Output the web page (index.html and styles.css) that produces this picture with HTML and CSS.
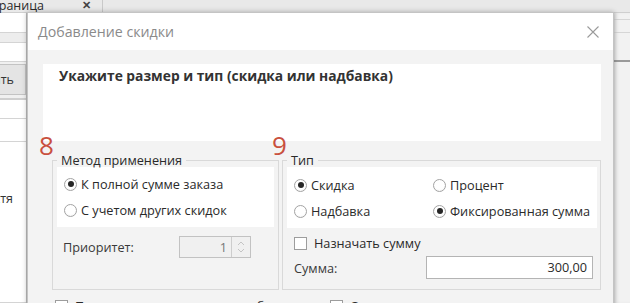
FILE: index.html
```html
<!DOCTYPE html>
<html lang="ru">
<head>
<meta charset="utf-8">
<title>Добавление скидки</title>
<link rel="stylesheet" href="styles.css">
</head>
<body>
<div class="app">
  <div class="tabbar">
    <div class="tab"><span class="tab-title">Страница</span><span class="tab-close">✕</span></div>
  </div>
  <div class="workspace">
    <div class="left-pane">
      <div class="lrow lrow-a"></div>
      <div class="lrow lrow-b"></div>
      <div class="lrow lrow-c"></div>
      <div class="lrow lrow-btn"><span class="lbtn"><span class="lbtn-text">Добавить</span></span></div>
      <div class="lrow lrow-d"></div>
      <div class="lrow lrow-e"></div>
      <div class="lrow lrow-f"><span class="ltext">Скидка на гостя</span></div>
    </div>
    <div class="center-pane"></div>
    <div class="right-pane">
      <div class="rrow rrow-a"></div>
      <div class="rrow rrow-b"></div>
      <div class="rrow rrow-c"></div>
      <div class="rrow rrow-d"></div>
    </div>
  </div>

  <div class="dialog">
    <div class="dialog-header">
      <span class="dialog-title">Добавление скидки</span>
      <svg class="dialog-close" width="12" height="12" viewBox="0 0 12 12"><path d="M0.5 0.5 L11.5 11.5 M11.5 0.5 L0.5 11.5" stroke="#9a9a9a" stroke-width="1.1" fill="none"/></svg>
    </div>
    <div class="dialog-body">
      <div class="info">Укажите размер и тип (скидка или надбавка)</div>
      <div class="groups">
        <fieldset class="group group-method">
          <legend class="legend"><span class="marker marker-8">8</span>Метод применения</legend>
          <div class="choice-panel">
            <div class="option"><span class="radio checked"></span>К полной сумме заказа</div>
            <div class="option"><span class="radio"></span>С учетом других скидок</div>
          </div>
          <div class="priority-row">
            <span class="field-label">Приоритет:</span>
            <div class="spinner">
              <span class="spinner-value">1</span>
              <span class="spinner-btns">
                <svg width="8" height="16" viewBox="0 0 8 16"><path d="M1 6 L4 3 L7 6 M1 10 L4 13 L7 10" stroke="#c4c4c4" stroke-width="1" fill="none"/></svg>
              </span>
            </div>
          </div>
        </fieldset>
        <fieldset class="group group-type">
          <legend class="legend"><span class="marker marker-9">9</span>Тип</legend>
          <div class="choice-panel type-grid">
            <div class="option"><span class="radio checked"></span>Скидка</div>
            <div class="option"><span class="radio"></span>Процент</div>
            <div class="option"><span class="radio"></span>Надбавка</div>
            <div class="option"><span class="radio checked"></span>Фиксированная сумма</div>
          </div>
          <div class="check-row"><span class="checkbox"></span>Назначать сумму</div>
          <div class="sum-row">
            <span class="field-label">Сумма:</span>
            <div class="sum-input">300,00</div>
          </div>
        </fieldset>
      </div>
      <div class="bottom-row">
        <div class="option option-wide"><span class="checkbox"></span>Применять только к заказам без скидки</div>
        <div class="option"><span class="checkbox"></span>Округлять</div>
      </div>
    </div>
  </div>
</div>
</body>
</html>
```
FILE: styles.css
```css
* { box-sizing: border-box; }
html, body { margin: 0; padding: 0; }
body {
  width: 630px;
  height: 303px;
  overflow: hidden;
  background: #ececec;
  font-family: "Open Sans", "Liberation Sans", sans-serif;
  color: #2a2a2a;
}
.app { position: relative; width: 630px; height: 303px; overflow: hidden; }

/* background application */
.tabbar {
  height: 13px;
  background: #e9e9e9;
  border-bottom: 1px solid #cfcfcf;
  display: flex;
}
.tab {
  margin-left: -15px;
  width: 118px;
  height: 13px;
  display: flex;
  align-items: center;
  justify-content: space-between;
  padding-right: 11px;
  border-right: 1px solid #c9c9c9;
  font-size: 12.5px;
  line-height: 12px;
  color: #2a2a2a;
}
.tab-title { margin-top: -2px; }
.tab-close { font-size: 11px; font-weight: bold; color: #444; margin-top: -3px; }

.workspace { display: flex; height: 290px; }
.left-pane { width: 27px; background: #f7f7f7; border-right: 1px solid #bdbdbd; display: flex; flex-direction: column; }
.lrow { border-bottom: 1px solid #d4d4d4; background: #fafafa; overflow: hidden; white-space: nowrap; font-size: 12.5px; color: #333; }
.lrow-a { height: 20px; background: #fff; }
.lrow-b { height: 10px; background: #ededed; }
.lrow-c { height: 19px; background: #fff; }
.lrow-btn { height: 38px; padding: 2px 0 3px; background: #f0f0f0; border-bottom: 2px solid #cfcfcf; }
.lbtn { display: flex; justify-content: flex-end; align-items: center; height: 100%; background: #e4e4e4; border: 1px solid #c3c3c3; border-left: none; padding-right: 11px; overflow: hidden; }
.lbtn-text { flex: none; }
.lrow-d { height: 19px; background: #fff; }
.lrow-e { height: 23px; background: #fff; }
.lrow-f { flex: 1; background: #fff; padding-top: 48px; padding-right: 13px; display: flex; justify-content: flex-end; align-items: flex-start; }
.ltext { flex: none; }
.center-pane { flex: 1; }
.right-pane { width: 17px; display: flex; flex-direction: column; background: #f2f2f2; box-shadow: inset 4px 0 4px -2px rgba(0,0,0,0.12); }
.rrow { border-bottom: 1px solid #d6d6d6; }
.rrow-a { height: 7px; }
.rrow-b { height: 13px; }
.rrow-c { height: 29px; border-bottom: 2px solid #9a9a9a; }
.rrow-d { flex: 1; border-bottom: none; }

/* dialog */
.dialog {
  position: absolute;
  left: 27px;
  top: 12px;
  width: 587px;
  height: 320px;
  background: #f3f3f3;
  border: 1px solid #c4c4c4;
  box-shadow: 0 0 5px rgba(0,0,0,0.28);
}
.dialog-header {
  height: 37px;
  background: #fff;
  display: flex;
  align-items: center;
  justify-content: space-between;
  padding: 0 14px 0 10px;
}
.dialog-title { font-size: 14.2px; color: #8a8a8a; margin-top: -1px; }
.dialog-close { display: block; margin-top: 1px; }

.dialog-body { padding: 14px 12px 0 15px; }
.info {
  height: 77px;
  background: #fff;
  padding: 2px 16px;
  font-size: 13.8px;
  font-weight: bold;
  color: #333;
}

.groups { display: flex; gap: 3px; margin-top: 12px; padding-left: 9px; }
.group {
  margin: 0;
  border: 1px solid #d9d9d9;
  padding: 0 4px 0 4px;
  min-width: 0;
}
.group-method { width: 227px; padding-bottom: 31px; }
.group-type { flex: 1; padding: 0 3px 9px 4px; }
.legend {
  position: relative;
  padding: 0 4px;
  font-size: 12.7px;
  line-height: 14px;
  color: #2a2a2a;
}
.marker {
  position: absolute;
  top: -21px;
  font-size: 26px;
  line-height: 26px;
  color: #c9503e;
}
.marker-8 { left: -18px; }
.marker-9 { left: -15px; }

.choice-panel {
  background: #fff;
  padding: 4px 0 4px 7px;
}
.type-grid { display: grid; grid-template-columns: 139px auto; padding-top: 5px; }
.option {
  height: 26px;
  display: flex;
  align-items: center;
  white-space: nowrap;
  font-size: 12.7px;
  color: #2a2a2a;
}
.radio {
  width: 13px;
  height: 13px;
  border-radius: 50%;
  border: 1px solid #a3a3a3;
  background: radial-gradient(circle at 50% 40%, #fff 55%, #ececec 100%);
  margin-right: 4px;
  position: relative;
  flex: none;
}
.radio.checked::after {
  content: "";
  position: absolute;
  left: 2.5px;
  top: 2.5px;
  width: 6px;
  height: 6px;
  border-radius: 50%;
  background: #262626;
}
.checkbox {
  width: 13px;
  height: 13px;
  border: 1px solid #9d9d9d;
  background: #fff;
  margin-right: 7px;
  flex: none;
}

.priority-row {
  margin-top: 9px;
  height: 22px;
  display: flex;
  align-items: center;
  padding-left: 6px;
}
.field-label { font-size: 12.7px; color: #3a3a3a; }
.spinner {
  margin-left: auto;
  margin-right: 23px;
  width: 72px;
  height: 22px;
  display: flex;
  border: 1px solid #c2c2c2;
  background: #f0f0f0;
}
.spinner-value { flex: 1; text-align: right; padding-right: 4px; color: #777; font-size: 12.7px; line-height: 20px; }
.spinner-btns { width: 19px; border-left: 1px solid #cdcdcd; display: flex; align-items: center; justify-content: center; }
.spinner-btns svg { display: block; }

.check-row {
  margin-top: 7px;
  height: 16px;
  display: flex;
  align-items: center;
  padding-left: 7px;
  font-size: 12.7px;
  color: #2a2a2a;
}
.sum-row {
  margin-top: 5px;
  height: 23px;
  display: flex;
  align-items: center;
  justify-content: space-between;
  padding-left: 7px;
  padding-right: 4px;
}
.sum-input {
  width: 167px;
  height: 23px;
  border: 1px solid #b4b4b4;
  background: #fff;
  text-align: right;
  padding-right: 5px;
  font-size: 12.7px;
  line-height: 21px;
  color: #2a2a2a;
}

.bottom-row { display: flex; margin-top: 8px; padding-left: 12px; }
.bottom-row .option { height: 16px; }
.bottom-row .option-wide { width: 275px; overflow: hidden; }
```
